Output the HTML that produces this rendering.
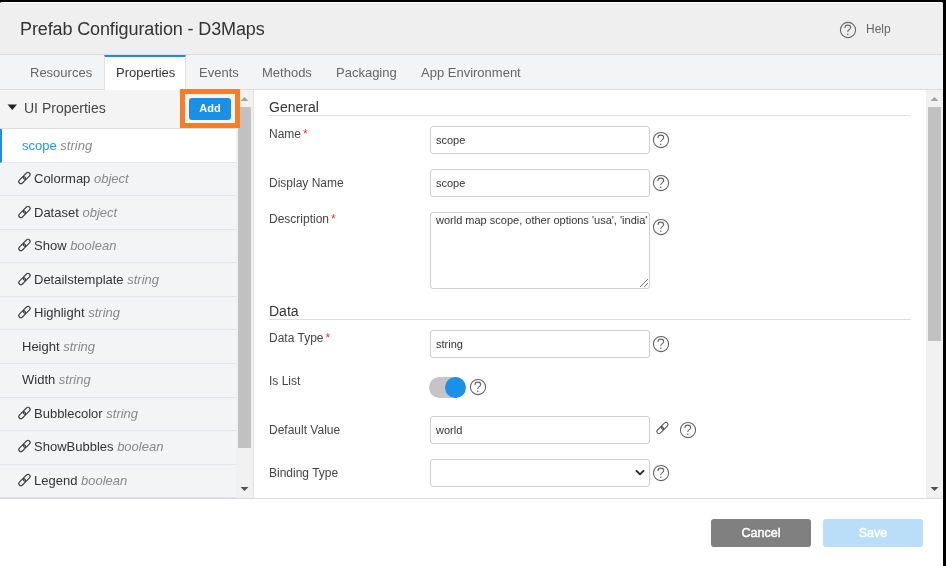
<!DOCTYPE html>
<html><head><meta charset="utf-8">
<style>
*{box-sizing:border-box}
html,body{margin:0;padding:0;width:946px;height:566px;overflow:hidden;background:#000;font-family:"Liberation Sans",sans-serif}
.a{position:absolute}
#dlg{position:absolute;left:-1px;top:2px;width:945px;height:570px;background:#fff;border:1px solid #fff;border-radius:3px;overflow:hidden}
#hdr{position:absolute;left:0;top:3px;width:943px;height:51px;background:#efefef}
#hline{position:absolute;left:0;top:54px;width:943px;height:1px;background:#dcdcdc}
#tabs{position:absolute;left:0;top:55px;width:943px;height:34px;background:#f3f4f6}
#tline{position:absolute;left:0;top:89px;width:943px;height:1px;background:#dcdcdc}
.tab{position:absolute;top:0;height:34px;line-height:34px;font-size:13px;color:#666;white-space:nowrap}
#act{position:absolute;left:104px;top:55px;width:82px;height:35px;background:#fff;border-top:2px solid #1a8fe8;border-left:1px solid #e2e2e2;border-right:1px solid #e2e2e2}
.t{position:absolute;white-space:nowrap}
#left{position:absolute;left:0;top:90px;width:236px;height:408px;background:#f3f4f6}
#lhead{position:absolute;left:0;top:90px;width:236px;height:39px;background:#f4f4f4;border-bottom:1px solid #dcdcdc}
.row{position:absolute;left:0;width:236px;height:33.5px;border-bottom:1px solid #dfe5ea;font-size:13px;color:#333;white-space:nowrap}
.row .ty{font-style:italic;color:#888}
.sb{position:absolute;background:#f1f1f1}
.thumb{position:absolute;background:#c1c1c1}
#right{position:absolute;left:254px;top:90px;width:689px;height:408px;background:#fff}
.lbl{position:absolute;left:269px;font-size:12px;color:#444;white-space:nowrap;line-height:20px}
.req{color:#e53935;margin-left:2px}
.inp{position:absolute;left:430px;width:220px;height:28px;border:1px solid #cfcfcf;border-radius:3px;background:#fff}
.itx{position:absolute;left:436px;font-size:11px;color:#333;white-space:nowrap;line-height:20px}
.sec{position:absolute;left:269px;font-size:14px;color:#333;line-height:20px}
.secl{position:absolute;left:269px;width:642px;height:1px;background:#ddd}
.hlp{position:absolute;width:17px;height:17px}
#foot{position:absolute;left:0;top:498px;width:943px;height:70px;background:#fff;border-top:1px solid #d9d9d9}
.btn{position:absolute;top:519px;width:100px;height:28px;border-radius:3px;color:#fff;font-size:12.5px;font-weight:normal;-webkit-text-stroke:0.45px #fff;text-align:center;line-height:28px}
</style></head>
<body><div id="root" style="position:absolute;left:0;top:0;width:946px;height:566px;will-change:transform">
<div id="dlg"></div>
<div id="hdr"></div>
<div id="hline"></div>
<div class="t" style="left:20px;top:17px;font-size:18px;line-height:24px;color:#333;letter-spacing:-0.12px">Prefab Configuration - D3Maps</div>
<svg class="a" style="left:839px;top:21px" width="18" height="18" viewBox="0 0 18 18"><circle cx="9" cy="9" r="7.6" fill="none" stroke="#666" stroke-width="1.1"/><path d="M5.9 7 C5.9 5 7.2 4.1 8.8 4.1 C10.5 4.1 11.7 5.2 11.7 6.6 C11.7 8 10.6 8.6 9.7 9.1 C9 9.5 8.8 10 8.8 10.9" fill="none" stroke="#666" stroke-width="1.1"/><circle cx="8.8" cy="13.3" r="0.8" fill="#666"/></svg>
<div class="t" style="left:866px;top:19px;font-size:12px;line-height:20px;color:#666">Help</div>

<div id="tabs"></div>
<div id="tline"></div>
<div id="act"></div>
<div class="t" style="left:30px;top:62.5px;font-size:13px;line-height:20px;color:#666">Resources</div>
<div class="t" style="left:116px;top:62.5px;font-size:13px;line-height:20px;color:#333">Properties</div>
<div class="t" style="left:199px;top:62.5px;font-size:13px;line-height:20px;color:#666">Events</div>
<div class="t" style="left:262px;top:62.5px;font-size:13px;line-height:20px;color:#666">Methods</div>
<div class="t" style="left:336px;top:62.5px;font-size:13px;line-height:20px;color:#666">Packaging</div>
<div class="t" style="left:421px;top:62.5px;font-size:13px;line-height:20px;color:#666">App Environment</div>

<!-- left panel -->
<div id="left"></div>
<div id="lhead"></div>
<svg class="a" style="left:7px;top:104px" width="11" height="7" viewBox="0 0 11 7"><path d="M0.5 0.5 L10 0.5 L5.25 6 Z" fill="#222"/></svg>
<div class="t" style="left:24px;top:98px;font-size:14px;line-height:20px;color:#444">UI Properties</div>

<div id="rows">
<div class="row" style="top:129px;height:34px;background:#fff;border-left:2px solid #1a8fe8"><span class="a" style="left:20px;top:6.99px;line-height:20px"><span style="color:#2196f3">scope</span> <span class="ty">string</span></span></div>
<div class="row" style="top:163px;height:33px"><svg class="a" style="left:16px;top:7.4px" width="17" height="17" viewBox="0 0 17 17"><g transform="translate(8.45 8) rotate(-45)" fill="none" stroke="#3a3a3a" stroke-width="1.15"><rect x="-0.9" y="-2.1" width="8" height="4.2" rx="2.1"/><rect x="-7.1" y="-2.1" width="8" height="4.2" rx="2.1"/></g></svg><span class="a" style="left:34px;top:6.49px;line-height:20px">Colormap <span class="ty">object</span></span></div>
<div class="row" style="top:196px;height:34px"><svg class="a" style="left:16px;top:7.9px" width="17" height="17" viewBox="0 0 17 17"><g transform="translate(8.45 8) rotate(-45)" fill="none" stroke="#3a3a3a" stroke-width="1.15"><rect x="-0.9" y="-2.1" width="8" height="4.2" rx="2.1"/><rect x="-7.1" y="-2.1" width="8" height="4.2" rx="2.1"/></g></svg><span class="a" style="left:34px;top:6.99px;line-height:20px">Dataset <span class="ty">object</span></span></div>
<div class="row" style="top:230px;height:33px"><svg class="a" style="left:16px;top:7.4px" width="17" height="17" viewBox="0 0 17 17"><g transform="translate(8.45 8) rotate(-45)" fill="none" stroke="#3a3a3a" stroke-width="1.15"><rect x="-0.9" y="-2.1" width="8" height="4.2" rx="2.1"/><rect x="-7.1" y="-2.1" width="8" height="4.2" rx="2.1"/></g></svg><span class="a" style="left:34px;top:6.49px;line-height:20px">Show <span class="ty">boolean</span></span></div>
<div class="row" style="top:263px;height:34px"><svg class="a" style="left:16px;top:7.9px" width="17" height="17" viewBox="0 0 17 17"><g transform="translate(8.45 8) rotate(-45)" fill="none" stroke="#3a3a3a" stroke-width="1.15"><rect x="-0.9" y="-2.1" width="8" height="4.2" rx="2.1"/><rect x="-7.1" y="-2.1" width="8" height="4.2" rx="2.1"/></g></svg><span class="a" style="left:34px;top:6.99px;line-height:20px">Detailstemplate <span class="ty">string</span></span></div>
<div class="row" style="top:297px;height:33px"><svg class="a" style="left:16px;top:7.4px" width="17" height="17" viewBox="0 0 17 17"><g transform="translate(8.45 8) rotate(-45)" fill="none" stroke="#3a3a3a" stroke-width="1.15"><rect x="-0.9" y="-2.1" width="8" height="4.2" rx="2.1"/><rect x="-7.1" y="-2.1" width="8" height="4.2" rx="2.1"/></g></svg><span class="a" style="left:34px;top:6.49px;line-height:20px">Highlight <span class="ty">string</span></span></div>
<div class="row" style="top:330px;height:34px"><span class="a" style="left:22px;top:6.99px;line-height:20px">Height <span class="ty">string</span></span></div>
<div class="row" style="top:364px;height:34px"><span class="a" style="left:22px;top:6.49px;line-height:20px">Width <span class="ty">string</span></span></div>
<div class="row" style="top:398px;height:33px"><svg class="a" style="left:16px;top:6.9px" width="17" height="17" viewBox="0 0 17 17"><g transform="translate(8.45 8) rotate(-45)" fill="none" stroke="#3a3a3a" stroke-width="1.15"><rect x="-0.9" y="-2.1" width="8" height="4.2" rx="2.1"/><rect x="-7.1" y="-2.1" width="8" height="4.2" rx="2.1"/></g></svg><span class="a" style="left:34px;top:5.99px;line-height:20px">Bubblecolor <span class="ty">string</span></span></div>
<div class="row" style="top:431px;height:34px"><svg class="a" style="left:16px;top:7.4px" width="17" height="17" viewBox="0 0 17 17"><g transform="translate(8.45 8) rotate(-45)" fill="none" stroke="#3a3a3a" stroke-width="1.15"><rect x="-0.9" y="-2.1" width="8" height="4.2" rx="2.1"/><rect x="-7.1" y="-2.1" width="8" height="4.2" rx="2.1"/></g></svg><span class="a" style="left:34px;top:6.49px;line-height:20px">ShowBubbles <span class="ty">boolean</span></span></div>
<div class="row" style="top:465px;height:33px"><svg class="a" style="left:16px;top:6.9px" width="17" height="17" viewBox="0 0 17 17"><g transform="translate(8.45 8) rotate(-45)" fill="none" stroke="#3a3a3a" stroke-width="1.15"><rect x="-0.9" y="-2.1" width="8" height="4.2" rx="2.1"/><rect x="-7.1" y="-2.1" width="8" height="4.2" rx="2.1"/></g></svg><span class="a" style="left:34px;top:5.99px;line-height:20px">Legend <span class="ty">boolean</span></span></div>
</div><!--/rows-->

<!-- left scrollbar -->
<div class="sb" style="left:236px;top:90px;width:17px;height:408px"></div>
<div class="thumb" style="left:238px;top:107px;width:13px;height:341px"></div>
<svg class="a" style="left:240px;top:96px" width="9" height="6" viewBox="0 0 9 6"><path d="M0.5 5 L8.5 5 L4.5 1 Z" fill="#a3a3a3"/></svg>
<svg class="a" style="left:240px;top:486px" width="9" height="6" viewBox="0 0 9 6"><path d="M0.5 1 L8.5 1 L4.5 5 Z" fill="#505050"/></svg>
<div class="a" style="left:253px;top:90px;width:1px;height:408px;background:#e3e3e3"></div>
<div class="a" style="left:180px;top:89px;width:60px;height:39px;border:5px solid #fb7d22;background:#f4f4f4"></div>
<div class="a" style="left:189px;top:98px;width:42px;height:22px;border-radius:3px;background:#1a8fe8;color:#fff;font-size:11px;font-weight:bold;text-align:center;line-height:20px">Add</div>

<!-- right panel -->
<div id="right"></div>
<div id="form">
<div class="sec" style="top:96.85px">General</div><div class="secl" style="top:115px"></div>
<div class="lbl" style="top:123.7px">Name<span class="req">*</span></div>
<div class="inp" style="top:126px"></div><div class="itx" style="top:130.2px">scope</div>
<svg class="a" style="left:652px;top:131px" width="18" height="18" viewBox="0 0 18 18"><circle cx="9" cy="9" r="7.6" fill="none" stroke="#606060" stroke-width="1.05"/><path d="M5.9 7 C5.9 5 7.2 4.1 8.8 4.1 C10.5 4.1 11.7 5.2 11.7 6.6 C11.7 8 10.6 8.6 9.7 9.1 C9 9.5 8.8 10 8.8 10.9" fill="none" stroke="#606060" stroke-width="1.05"/><circle cx="8.8" cy="13.3" r="0.8" fill="#606060"/></svg>
<div class="lbl" style="top:172.8px">Display Name</div>
<div class="inp" style="top:169px"></div><div class="itx" style="top:172.7px">scope</div>
<svg class="a" style="left:652px;top:174px" width="18" height="18" viewBox="0 0 18 18"><circle cx="9" cy="9" r="7.6" fill="none" stroke="#606060" stroke-width="1.05"/><path d="M5.9 7 C5.9 5 7.2 4.1 8.8 4.1 C10.5 4.1 11.7 5.2 11.7 6.6 C11.7 8 10.6 8.6 9.7 9.1 C9 9.5 8.8 10 8.8 10.9" fill="none" stroke="#606060" stroke-width="1.05"/><circle cx="8.8" cy="13.3" r="0.8" fill="#606060"/></svg>
<div class="lbl" style="top:209.4px">Description<span class="req">*</span></div>
<div class="inp" style="top:212px;height:77px"></div><div class="itx" style="top:210.4px">world map scope, other options 'usa', 'india'</div>
<svg class="a" style="left:637px;top:276px" width="12" height="12" viewBox="0 0 12 12"><path d="M3 11 L11 3 M7 11 L11 7" stroke="#777" stroke-width="1"/></svg>
<svg class="a" style="left:652px;top:218px" width="18" height="18" viewBox="0 0 18 18"><circle cx="9" cy="9" r="7.6" fill="none" stroke="#606060" stroke-width="1.05"/><path d="M5.9 7 C5.9 5 7.2 4.1 8.8 4.1 C10.5 4.1 11.7 5.2 11.7 6.6 C11.7 8 10.6 8.6 9.7 9.1 C9 9.5 8.8 10 8.8 10.9" fill="none" stroke="#606060" stroke-width="1.05"/><circle cx="8.8" cy="13.3" r="0.8" fill="#606060"/></svg>
<div class="sec" style="top:300.95px">Data</div><div class="secl" style="top:319px"></div>
<div class="lbl" style="top:327.6px">Data Type<span class="req">*</span></div>
<div class="inp" style="top:330px"></div><div class="itx" style="top:334.2px">string</div>
<svg class="a" style="left:652px;top:335px" width="18" height="18" viewBox="0 0 18 18"><circle cx="9" cy="9" r="7.6" fill="none" stroke="#606060" stroke-width="1.05"/><path d="M5.9 7 C5.9 5 7.2 4.1 8.8 4.1 C10.5 4.1 11.7 5.2 11.7 6.6 C11.7 8 10.6 8.6 9.7 9.1 C9 9.5 8.8 10 8.8 10.9" fill="none" stroke="#606060" stroke-width="1.05"/><circle cx="8.8" cy="13.3" r="0.8" fill="#606060"/></svg>
<div class="lbl" style="top:370.9px">Is List</div>
<div class="a" style="left:429px;top:377px;width:36px;height:21px;border-radius:11px;background:#c6c4c4"></div>
<div class="a" style="left:445px;top:377px;width:21px;height:21px;border-radius:50%;background:#1990ea"></div>
<svg class="a" style="left:469px;top:378px" width="18" height="18" viewBox="0 0 18 18"><circle cx="9" cy="9" r="7.6" fill="none" stroke="#606060" stroke-width="1.05"/><path d="M5.9 7 C5.9 5 7.2 4.1 8.8 4.1 C10.5 4.1 11.7 5.2 11.7 6.6 C11.7 8 10.6 8.6 9.7 9.1 C9 9.5 8.8 10 8.8 10.9" fill="none" stroke="#606060" stroke-width="1.05"/><circle cx="8.8" cy="13.3" r="0.8" fill="#606060"/></svg>
<div class="lbl" style="top:419.6px">Default Value</div>
<div class="inp" style="top:416px"></div><div class="itx" style="top:420.2px">world</div>
<svg class="a" style="left:654px;top:420px" width="17" height="17" viewBox="0 0 17 17"><g transform="translate(8.45 8) rotate(-45)" fill="none" stroke="#444" stroke-width="1"><rect x="-0.9" y="-2.1" width="8" height="4.2" rx="2.1"/><rect x="-7.1" y="-2.1" width="8" height="4.2" rx="2.1"/></g></svg>
<svg class="a" style="left:679px;top:421px" width="18" height="18" viewBox="0 0 18 18"><circle cx="9" cy="9" r="7.6" fill="none" stroke="#606060" stroke-width="1.05"/><path d="M5.9 7 C5.9 5 7.2 4.1 8.8 4.1 C10.5 4.1 11.7 5.2 11.7 6.6 C11.7 8 10.6 8.6 9.7 9.1 C9 9.5 8.8 10 8.8 10.9" fill="none" stroke="#606060" stroke-width="1.05"/><circle cx="8.8" cy="13.3" r="0.8" fill="#606060"/></svg>
<div class="lbl" style="top:462.6px">Binding Type</div>
<div class="inp" style="top:459px"></div>
<svg class="a" style="left:634px;top:468px" width="12" height="9" viewBox="0 0 12 9"><path d="M2 2.3 L6 6.3 L10 2.3" fill="none" stroke="#222" stroke-width="1.8"/></svg>
<svg class="a" style="left:652px;top:464px" width="18" height="18" viewBox="0 0 18 18"><circle cx="9" cy="9" r="7.6" fill="none" stroke="#606060" stroke-width="1.05"/><path d="M5.9 7 C5.9 5 7.2 4.1 8.8 4.1 C10.5 4.1 11.7 5.2 11.7 6.6 C11.7 8 10.6 8.6 9.7 9.1 C9 9.5 8.8 10 8.8 10.9" fill="none" stroke="#606060" stroke-width="1.05"/><circle cx="8.8" cy="13.3" r="0.8" fill="#606060"/></svg>
</div><!--/form-->

<!-- right scrollbar -->
<div class="sb" style="left:926px;top:90px;width:17px;height:408px"></div>
<div class="thumb" style="left:928px;top:107px;width:13px;height:234px"></div>
<svg class="a" style="left:930px;top:96px" width="9" height="6" viewBox="0 0 9 6"><path d="M0.5 5 L8.5 5 L4.5 1 Z" fill="#a3a3a3"/></svg>
<svg class="a" style="left:930px;top:486px" width="9" height="6" viewBox="0 0 9 6"><path d="M0.5 1 L8.5 1 L4.5 5 Z" fill="#505050"/></svg>

<div id="foot"></div>
<div class="btn" style="left:711px;background:#808080">Cancel</div>
<div class="btn" style="left:823px;background:#bbdef8">Save</div>
<div class="a" style="left:943px;top:0;width:3px;height:566px;background:#000"></div>
</div></body></html>
